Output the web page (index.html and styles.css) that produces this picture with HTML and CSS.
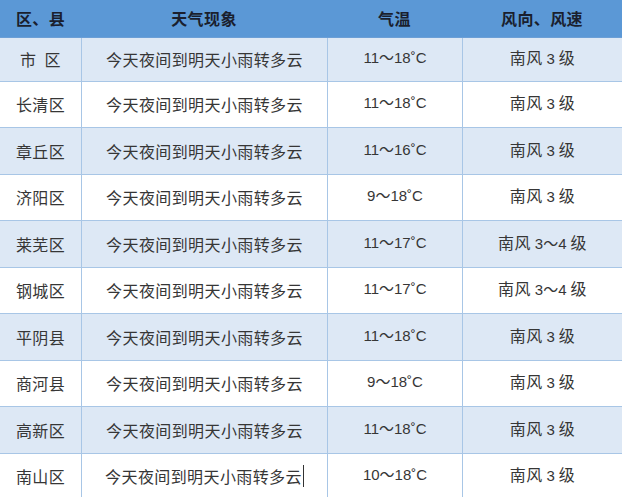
FILE: index.html
```html
<!DOCTYPE html>
<html lang="zh-CN">
<head>
<meta charset="utf-8">
<title>天气预报</title>
<link rel="stylesheet" href="styles.css">
</head>
<body>
<div class="table">
  <div class="row head">
    <div class="cell">区、县</div>
    <div class="cell">天气现象</div>
    <div class="cell">气温</div>
    <div class="cell">风向、风速</div>
  </div>
  <div class="row odd first">
    <div class="cell">市&nbsp;&nbsp;区</div>
    <div class="cell">今天夜间到明天小雨转多云</div>
    <div class="cell num"><span>11<span class="t">～</span>18˚C</span></div>
    <div class="cell wind"><span>南风 <span class="n">3</span> 级</span></div>
  </div>
  <div class="row">
    <div class="cell">长清区</div>
    <div class="cell">今天夜间到明天小雨转多云</div>
    <div class="cell num"><span>11<span class="t">～</span>18˚C</span></div>
    <div class="cell wind"><span>南风 <span class="n">3</span> 级</span></div>
  </div>
  <div class="row odd">
    <div class="cell">章丘区</div>
    <div class="cell">今天夜间到明天小雨转多云</div>
    <div class="cell num"><span>11<span class="t">～</span>16˚C</span></div>
    <div class="cell wind"><span>南风 <span class="n">3</span> 级</span></div>
  </div>
  <div class="row">
    <div class="cell">济阳区</div>
    <div class="cell">今天夜间到明天小雨转多云</div>
    <div class="cell num"><span>9<span class="t">～</span>18˚C</span></div>
    <div class="cell wind"><span>南风 <span class="n">3</span> 级</span></div>
  </div>
  <div class="row odd">
    <div class="cell">莱芜区</div>
    <div class="cell">今天夜间到明天小雨转多云</div>
    <div class="cell num"><span>11<span class="t">～</span>17˚C</span></div>
    <div class="cell wind"><span>南风 <span class="n">3<span class="t">～</span>4</span> 级</span></div>
  </div>
  <div class="row">
    <div class="cell">钢城区</div>
    <div class="cell">今天夜间到明天小雨转多云</div>
    <div class="cell num"><span>11<span class="t">～</span>17˚C</span></div>
    <div class="cell wind"><span>南风 <span class="n">3<span class="t">～</span>4</span> 级</span></div>
  </div>
  <div class="row odd">
    <div class="cell">平阴县</div>
    <div class="cell">今天夜间到明天小雨转多云</div>
    <div class="cell num"><span>11<span class="t">～</span>18˚C</span></div>
    <div class="cell wind"><span>南风 <span class="n">3</span> 级</span></div>
  </div>
  <div class="row">
    <div class="cell">商河县</div>
    <div class="cell">今天夜间到明天小雨转多云</div>
    <div class="cell num"><span>9<span class="t">～</span>18˚C</span></div>
    <div class="cell wind"><span>南风 <span class="n">3</span> 级</span></div>
  </div>
  <div class="row odd">
    <div class="cell">高新区</div>
    <div class="cell">今天夜间到明天小雨转多云</div>
    <div class="cell num"><span>11<span class="t">～</span>18˚C</span></div>
    <div class="cell wind"><span>南风 <span class="n">3</span> 级</span></div>
  </div>
  <div class="row">
    <div class="cell">南山区</div>
    <div class="cell"><span class="caret">今天夜间到明天小雨转多云</span></div>
    <div class="cell num"><span>10<span class="t">～</span>18˚C</span></div>
    <div class="cell wind"><span>南风 <span class="n">3</span> 级</span></div>
  </div>
</div>
</body>
</html>
```

FILE: styles.css
```css
html, body {
  margin: 0;
  padding: 0;
  background: #ffffff;
}
body {
  font-family: "Noto Sans CJK SC", "Liberation Sans", sans-serif;
  color: #363636;
  overflow: hidden;
}
.table {
  width: 622px;
  display: flex;
  flex-direction: column;
}
.row {
  display: grid;
  grid-template-columns: 81px 246px 135px 160px;
  height: 45.5px;
  border-bottom: 1px solid #a8c6e6;
  background: #ffffff;
}
.row.odd {
  background: #dde8f5;
}
.row.first {
  height: 42.7px;
}
.row.head {
  height: 37px;
  border-bottom: 1px solid #6c9fd6;
  background: #5b98d6;
}
.cell {
  display: flex;
  align-items: center;
  justify-content: center;
  font-size: 16px;
  letter-spacing: 0.4px;
  white-space: nowrap;
}
.row .cell + .cell {
  border-left: 1px solid #a8c6e6;
}
.row.head .cell + .cell {
  border-left: none;
}
.row.head .cell {
  font-weight: bold;
  color: #1a1f2e;
  font-size: 16px;
  padding-bottom: 2px;
}
.num {
  font-family: "Liberation Sans", "Noto Sans CJK SC", sans-serif;
  font-size: 15px;
  letter-spacing: 0;
  padding-bottom: 5px;
}
.wind {
  padding-bottom: 4px;
}
.n {
  font-family: "Liberation Sans", "Noto Sans CJK SC", sans-serif;
  font-size: 15px;
  letter-spacing: 0;
}
.t {
  font-family: "Noto Sans CJK SC", sans-serif;
  font-size: 15px;
}
.caret {
  border-right: 1px solid #333333;
  padding-right: 1px;
  line-height: 22px;
}
```
